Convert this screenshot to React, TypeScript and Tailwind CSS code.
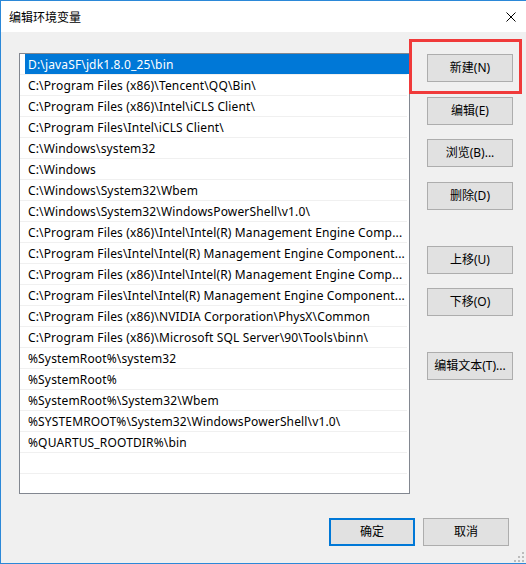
import React from "react";

const PATHS = [
  "D:\\javaSF\\jdk1.8.0_25\\bin",
  "C:\\Program Files (x86)\\Tencent\\QQ\\Bin\\",
  "C:\\Program Files (x86)\\Intel\\iCLS Client\\",
  "C:\\Program Files\\Intel\\iCLS Client\\",
  "C:\\Windows\\system32",
  "C:\\Windows",
  "C:\\Windows\\System32\\Wbem",
  "C:\\Windows\\System32\\WindowsPowerShell\\v1.0\\",
  "C:\\Program Files (x86)\\Intel\\Intel(R) Management Engine Comp...",
  "C:\\Program Files\\Intel\\Intel(R) Management Engine Component...",
  "C:\\Program Files (x86)\\Intel\\Intel(R) Management Engine Comp...",
  "C:\\Program Files\\Intel\\Intel(R) Management Engine Component...",
  "C:\\Program Files (x86)\\NVIDIA Corporation\\PhysX\\Common",
  "C:\\Program Files (x86)\\Microsoft SQL Server\\90\\Tools\\binn\\",
  "%SystemRoot%\\system32",
  "%SystemRoot%",
  "%SystemRoot%\\System32\\Wbem",
  "%SYSTEMROOT%\\System32\\WindowsPowerShell\\v1.0\\",
  "%QUARTUS_ROOTDIR%\\bin",
];

const Btn = ({ label, className = "" }: { label: string; className?: string }) => (
  <button
    className={`h-[28px] w-[86px] border border-[#adadad] bg-[#e1e1e1] text-[12px] text-black flex items-center justify-center ${className}`}
  >
    {label}
  </button>
);

export default function App() {
  return (
    <div className="relative w-[526px] h-[564px] border-t border-l border-b border-[#2b88d8] bg-[#f0f0f0] font-['Noto_Sans','Noto_Sans_CJK_SC',sans-serif] text-[12px] text-black flex flex-col overflow-hidden">
      {/* 标题栏 */}
      <div className="h-[31px] bg-white flex items-center justify-between pl-[8px] pr-[10px] shrink-0">
        <span className="font-['Noto_Sans_CJK_SC',sans-serif] text-[12px]">编辑环境变量</span>
        <svg width="10" height="10" viewBox="0 0 10 10">
          <path d="M0.5 0.5 L9.5 9.5 M9.5 0.5 L0.5 9.5" stroke="#000" strokeWidth="1" />
        </svg>
      </div>

      <div className="flex pl-[18px] pt-[21px]">
        {/* 列表 */}
        <div className="w-[391px] h-[441px] border border-[#828790] bg-white flex flex-col">
          {PATHS.map((p, i) => (
            <div key={i} className="h-[21px] shrink-0 border-b border-[#f0f0f0] mr-[2px] flex">
              <div
                className={`ml-[5px] flex-1 min-w-0 pl-[3px] pt-[1px] flex items-center ${i === 0 ? "bg-[#0078d7] text-white -mr-[2px]" : ""}`}
              >
                <span className="whitespace-nowrap tracking-[0.15px] leading-[19px]">{p}</span>
              </div>
            </div>
          ))}
          <div className="h-[21px] shrink-0 border-b border-[#f0f0f0] mr-[2px]" />
          <div className="h-[21px] shrink-0 border-b border-[#f0f0f0] mr-[2px]" />
        </div>

        {/* 按钮 */}
        <div className="ml-[17px] flex flex-col">
          <Btn label="新建(N)" className="mt-[1px]" />
          <Btn label="编辑(E)" className="mt-[15px]" />
          <Btn label="浏览(B)..." className="mt-[14px]" />
          <Btn label="删除(D)" className="mt-[15px]" />
          <Btn label="上移(U)" className="mt-[36px]" />
          <Btn label="下移(O)" className="mt-[14px]" />
          <Btn label="编辑文本(T)..." className="mt-[36px]" />
        </div>
      </div>

      {/* 底部按钮 */}
      <div className="flex justify-end gap-[8px] pr-[17px] mt-[24px]">
        <button className="h-[28px] w-[86px] border-2 border-[#0078d7] bg-[#e1e1e1] text-[12px] flex items-center justify-center">
          确定
        </button>
        <Btn label="取消" />
      </div>

      {/* 调整大小手柄 */}
      <svg width="10" height="10" viewBox="0 0 10 10" className="absolute right-[2px] bottom-[1px]">
        <rect x="8" y="0" width="2" height="2" fill="#bcbcbc" />
        <rect x="4" y="4" width="2" height="2" fill="#bcbcbc" />
        <rect x="8" y="4" width="2" height="2" fill="#bcbcbc" />
        <rect x="0" y="8" width="2" height="2" fill="#bcbcbc" />
        <rect x="4" y="8" width="2" height="2" fill="#bcbcbc" />
        <rect x="8" y="8" width="2" height="2" fill="#bcbcbc" />
      </svg>

      {/* 红色标注框 */}
      <div className="absolute left-[408px] top-[38px] w-[113px] h-[55px] border-[3px] border-[#f03a3a]" />
    </div>
  );
}
